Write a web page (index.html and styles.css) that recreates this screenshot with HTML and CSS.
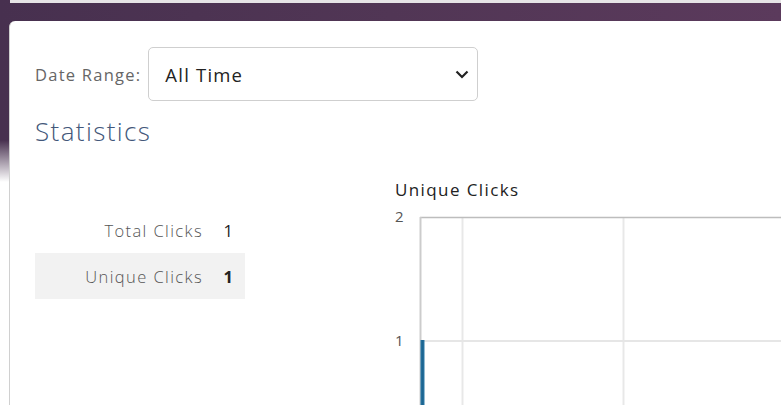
FILE: index.html
```html
<!DOCTYPE html>
<html>
<head>
<meta charset="utf-8">
<link rel="stylesheet" href="styles.css">
</head>
<body>
<div class="page">
  <div class="topstrip"></div>
  <div class="panel">
    <div class="filter">
      <span class="filter-label">Date Range:</span>
      <div class="select">
        <span class="select-value">All Time</span>
        <svg class="chev" width="14" height="9" viewBox="0 0 14 9"><path d="M1.5 1.5 L7 7 L12.5 1.5" fill="none" stroke="#222" stroke-width="2.2"/></svg>
      </div>
    </div>
    <h2 class="heading">Statistics</h2>
    <div class="stats">
      <div class="table">
        <div class="row"><span class="k">Total Clicks</span><span class="v">1</span></div>
        <div class="row alt"><span class="k">Unique Clicks</span><span class="v b">1</span></div>
      </div>
      <div class="chart">
        <div class="chart-title">Unique Clicks</div>
        <svg class="plot" width="386" height="200" viewBox="0 0 386 200">
          <line x1="67.5" y1="12" x2="67.5" y2="200" stroke="#e8e8e8" stroke-width="2"/>
          <line x1="228.5" y1="12" x2="228.5" y2="200" stroke="#e8e8e8" stroke-width="2"/>
          <line x1="26" y1="136" x2="386" y2="136" stroke="#e6e6e6" stroke-width="2"/>
          <line x1="25" y1="12.5" x2="386" y2="12.5" stroke="#bdbdbd" stroke-width="1.5"/>
          <line x1="25.5" y1="12" x2="25.5" y2="200" stroke="#cccccc" stroke-width="2"/>
          <rect x="25.5" y="135" width="4" height="65" fill="#2a78a6"/>
          <rect x="26.5" y="135" width="2" height="65" fill="#1d6590"/>
          <text x="0" y="17" class="tick">2</text>
          <text x="0" y="141" class="tick">1</text>
        </svg>
      </div>
    </div>
  </div>
</div>
</body>
</html>
```
FILE: styles.css
```css
html, body {
  margin: 0;
  height: 100%;
}
body {
  background:
    linear-gradient(to bottom, rgba(255,255,255,0) 0, rgba(255,255,255,0) 140px, #ffffff 182px),
    linear-gradient(to right, #47304f 0%, #513655 50%, #5b3a5c 100%);
  font-family: "Open Sans", "Lato", sans-serif;
  overflow: hidden;
}
.page {
  padding-left: 9px;
  height: 405px;
  overflow: hidden;
}
.topstrip {
  height: 3px;
  margin-left: 1px;
  background: #e6e4e6;
}
.panel {
  margin-top: 18px;
  background: #ffffff;
  border-left: 1px solid #d0d0d0;
  border-top-left-radius: 6px;
  height: 384px;
  box-sizing: border-box;
  padding-left: 25px;
  padding-top: 26px;
}
.filter {
  display: flex;
  align-items: center;
  gap: 7px;
}
.filter-label {
  font-size: 16.5px;
  letter-spacing: 1.25px;
  color: #666666;
}
.select {
  border: 1px solid #cfcfcf;
  border-radius: 5px;
  display: flex;
  align-items: center;
  justify-content: space-between;
  padding: 0 8px 0 16px;
  box-sizing: border-box;
  width: 330px;
  height: 54px;
}
.select-value {
  font-size: 18.5px;
  letter-spacing: 1.2px;
  color: #222222;
}
.heading {
  margin: 14px 0 0 0;
  font-size: 26px;
  line-height: 32px;
  font-weight: 300;
  letter-spacing: 1.4px;
  color: #43577a;
}
.stats {
  display: flex;
  margin-top: 33px;
}
.table {
  width: 210px;
  padding-top: 27px;
  margin-right: 150px;
}
.row {
  display: flex;
  height: 46px;
  align-items: center;
  font-size: 16.5px;
  color: #555555;
}
.row.alt {
  background: #f2f2f2;
}
.k {
  width: 168px;
  text-align: right;
  font-weight: 300;
  letter-spacing: 1.4px;
  margin-right: -1.4px;
}
.v {
  margin-left: 22px;
  color: #222222;
}
.v.b {
  font-weight: 700;
}
.chart-title {
  font-size: 17px;
  line-height: 20px;
  letter-spacing: 1.4px;
  color: #222222;
  height: 25px;
}
.plot {
  display: block;
}
.tick {
  font-family: "Open Sans", "Lato", sans-serif;
  font-size: 15px;
  fill: #555555;
}
```
